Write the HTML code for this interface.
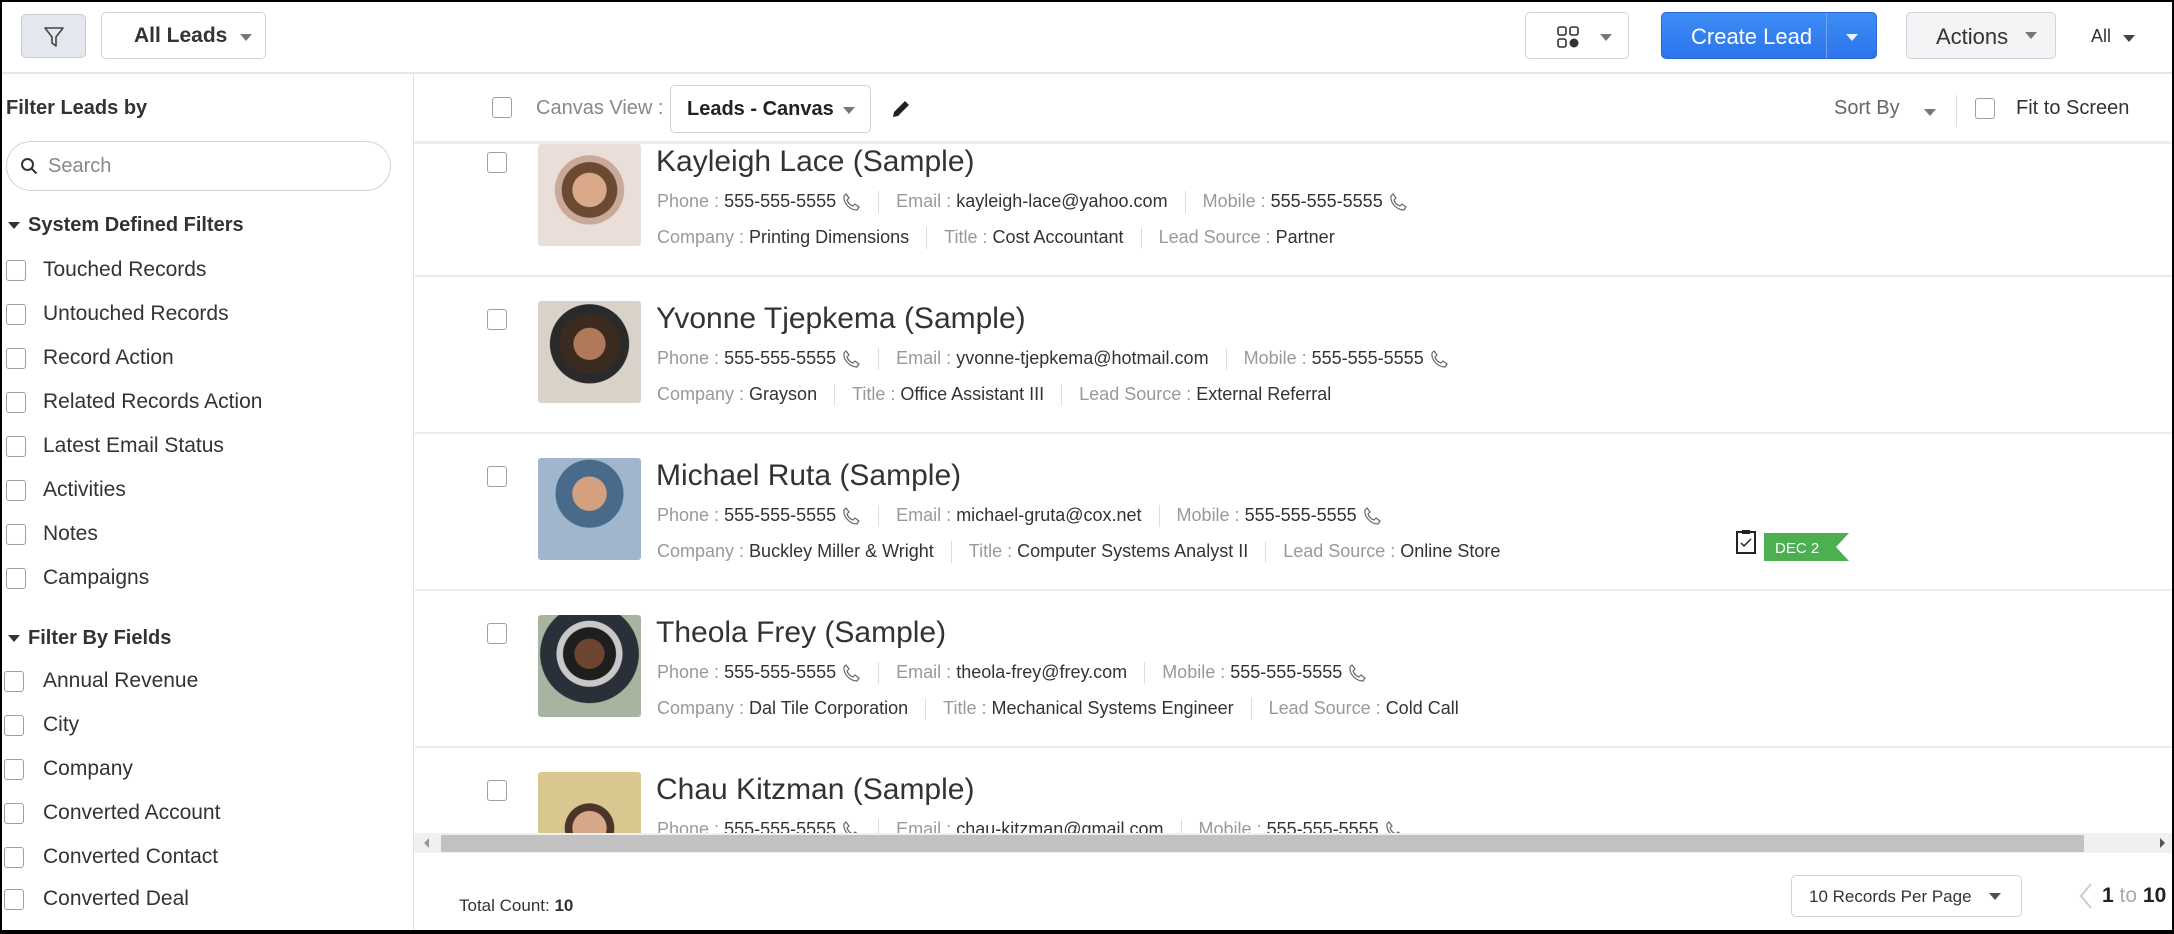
<!DOCTYPE html>
<html><head><meta charset="utf-8"><style>
*{box-sizing:border-box;margin:0;padding:0}
html,body{overflow:hidden}
body{width:2174px;height:934px;overflow:hidden;background:#fff;font-family:"Liberation Sans",sans-serif;color:#333;position:relative}
.frame{position:absolute;left:0;top:0;width:2174px;height:934px;border:2px solid #000;border-bottom-width:4px;z-index:50;pointer-events:none}
.abs{position:absolute}
.btn{position:absolute;border:1px solid #cfd3d9;border-radius:5px;background:#fff}
.caret{display:inline-block;width:0;height:0;border-left:6px solid transparent;border-right:6px solid transparent;border-top:7px solid #777}
.cb{position:absolute;width:20px;height:21px;border:1.5px solid #9aa0a6;border-radius:3px;background:#fff}
.side{position:absolute;left:43px;font-size:21px;color:#333}
.hd{position:absolute;left:8px;font-size:20px;font-weight:bold;color:#333}
.card{position:absolute;left:415px;width:1757px;height:157px;border-bottom:2px solid #ececec}
.name{position:absolute;left:241px;top:25px;font-size:30px;color:#333;white-space:nowrap}
.row{position:absolute;left:242px;font-size:18px;white-space:nowrap;color:#333}
.l{color:#999}
.sep{display:inline-block;width:1px;height:22px;background:#ddd;vertical-align:middle;margin:0 17px}
.ph{display:inline-block;width:20px;height:20px;vertical-align:middle;margin-left:5px}
.photo{position:absolute;left:123px;top:24px;width:103px;height:102px;border-radius:3px}
</style></head><body>
<div class="frame"></div>
<div class="btn" style="left:21px;top:14px;width:65px;height:44px;background:#e4e8ee;border-color:#c5cad2">
<svg class="abs" style="left:21px;top:11px" width="22" height="22" viewBox="0 0 22 22"><path d="M2 2h18l-7 9v9l-4-3v-6z" fill="none" stroke="#444" stroke-width="1.6" stroke-linejoin="round"/></svg></div>
<div class="btn" style="left:101px;top:12px;width:165px;height:47px"><span class="abs" style="left:32px;top:11px;font-size:21px;font-weight:bold;color:#333">All Leads</span><span class="caret abs" style="left:138px;top:21px"></span></div>
<div class="btn" style="left:1525px;top:12px;width:104px;height:47px">
<svg class="abs" style="left:31px;top:13px" width="22" height="22" viewBox="0 0 22 22"><rect x="1" y="1" width="8" height="8" rx="2" fill="none" stroke="#333" stroke-width="1.6"/><rect x="13" y="1" width="8" height="8" rx="2" fill="none" stroke="#333" stroke-width="1.6"/><rect x="1" y="13" width="8" height="8" rx="2" fill="none" stroke="#333" stroke-width="1.6"/><circle cx="17" cy="17" r="4.5" fill="#333"/></svg>
<span class="caret abs" style="left:74px;top:21px"></span></div>
<div class="abs" style="left:1661px;top:12px;width:216px;height:47px;border-radius:5px;background:linear-gradient(#3d8df5,#2d74ec);border:1px solid #2a6ad6">
<span class="abs" style="left:29px;top:11px;font-size:22px;color:#fff">Create Lead</span>
<span class="abs" style="left:164px;top:0;width:1px;height:45px;background:#6fa5f3"></span>
<span class="caret abs" style="left:184px;top:21px;border-top-color:#e8f0ff"></span></div>
<div class="btn" style="left:1906px;top:12px;width:150px;height:47px;background:#f3f4f6"><span class="abs" style="left:29px;top:11px;font-size:22px;color:#333">Actions</span><span class="caret abs" style="left:118px;top:19px"></span></div>
<span class="abs" style="left:2091px;top:26px;font-size:18px;color:#333">All</span><span class="caret abs" style="left:2123px;top:35px;border-top-color:#444"></span>
<div class="abs" style="left:0;top:72px;width:2174px;height:2px;background:#e3e7ec"></div>
<div class="abs" style="left:413px;top:74px;width:1px;height:856px;background:#dcdfe3"></div>
<div class="hd" style="left:6px;top:97px">Filter Leads by</div>
<div class="abs" style="left:6px;top:141px;width:385px;height:50px;border:1px solid #cfd3d9;border-radius:25px">
<svg class="abs" style="left:13px;top:15px" width="18" height="18" viewBox="0 0 18 18"><circle cx="7.5" cy="7.5" r="5.5" fill="none" stroke="#333" stroke-width="2"/><path d="M11.5 11.5l5 5" stroke="#333" stroke-width="2"/></svg>
<span class="abs" style="left:41px;top:13px;font-size:20px;color:#888">Search</span></div>
<div class="hd" style="top:214px"><span class="caret" style="border-top-color:#333;vertical-align:middle;margin-right:8px"></span>System Defined Filters</div>
<div class="cb" style="left:6px;top:260px"></div><div class="side" style="top:258px">Touched Records</div>
<div class="cb" style="left:6px;top:304px"></div><div class="side" style="top:302px">Untouched Records</div>
<div class="cb" style="left:6px;top:348px"></div><div class="side" style="top:346px">Record Action</div>
<div class="cb" style="left:6px;top:392px"></div><div class="side" style="top:390px">Related Records Action</div>
<div class="cb" style="left:6px;top:436px"></div><div class="side" style="top:434px">Latest Email Status</div>
<div class="cb" style="left:6px;top:480px"></div><div class="side" style="top:478px">Activities</div>
<div class="cb" style="left:6px;top:524px"></div><div class="side" style="top:522px">Notes</div>
<div class="cb" style="left:6px;top:568px"></div><div class="side" style="top:566px">Campaigns</div>
<div class="hd" style="top:627px"><span class="caret" style="border-top-color:#333;vertical-align:middle;margin-right:8px"></span>Filter By Fields</div>
<div class="cb" style="left:4px;top:671px"></div><div class="side" style="top:669px">Annual Revenue</div>
<div class="cb" style="left:4px;top:715px"></div><div class="side" style="top:713px">City</div>
<div class="cb" style="left:4px;top:759px"></div><div class="side" style="top:757px">Company</div>
<div class="cb" style="left:4px;top:803px"></div><div class="side" style="top:801px">Converted Account</div>
<div class="cb" style="left:4px;top:847px"></div><div class="side" style="top:845px">Converted Contact</div>
<div class="cb" style="left:4px;top:889px"></div><div class="side" style="top:887px">Converted Deal</div>
<div class="cb" style="left:492px;top:97px"></div>
<span class="abs" style="left:536px;top:97px;font-size:20px;color:#888">Canvas View :</span>
<div class="btn" style="left:670px;top:85px;width:201px;height:48px"><span class="abs" style="left:16px;top:12px;font-size:20px;font-weight:bold;color:#222">Leads - Canvas</span><span class="caret abs" style="left:172px;top:21px"></span></div>
<svg class="abs" style="left:890px;top:98px" width="22" height="22" viewBox="0 0 22 22"><path d="M3 19l1-5L15 3l4 4L8 18z" fill="#222"/></svg>
<span class="abs" style="left:1834px;top:97px;font-size:20px;color:#666">Sort By</span><span class="caret abs" style="left:1924px;top:109px"></span>
<div class="abs" style="left:1956px;top:95px;width:1px;height:32px;background:#ddd"></div>
<div class="cb" style="left:1975px;top:98px"></div>
<span class="abs" style="left:2016px;top:97px;font-size:20px;color:#333">Fit to Screen</span>
<div class="abs" style="left:414px;top:141px;width:1758px;height:3px;background:#eceef0"></div>
<div class="abs" style="left:0;top:144px;width:2172px;height:690px;overflow:hidden">
<div class="abs" style="left:0;top:-144px;width:2172px;height:834px">

<div class="card" style="top:120px">
<div class="cb" style="left:72px;top:32px"></div>
<div class="photo" style="background:radial-gradient(circle at 50% 45%,#d9a98a 0 22%,#6b4a33 23% 36%,#c9a99a 37% 45%,#e9ded8 46%)"></div>
<div class="name">Kayleigh Lace (Sample)</div>
<div class="row" style="top:71px"><span class="l">Phone : </span>555-555-5555<svg class="ph" viewBox="0 0 20 20"><path d="M5 2l3 4-2 2c1 3 3 5 6 6l2-2 4 3-2 3C9 18 2 11 3 4z" fill="none" stroke="#666" stroke-width="1.2"/></svg><span class="sep"></span><span class="l">Email : </span>kayleigh-lace@yahoo.com<span class="sep"></span><span class="l">Mobile : </span>555-555-5555<svg class="ph" viewBox="0 0 20 20"><path d="M5 2l3 4-2 2c1 3 3 5 6 6l2-2 4 3-2 3C9 18 2 11 3 4z" fill="none" stroke="#666" stroke-width="1.2"/></svg></div>
<div class="row" style="top:107px"><span class="l">Company : </span>Printing Dimensions<span class="sep"></span><span class="l">Title : </span>Cost Accountant<span class="sep"></span><span class="l">Lead Source : </span>Partner</div>
</div>

<div class="card" style="top:277px">
<div class="cb" style="left:72px;top:32px"></div>
<div class="photo" style="background:radial-gradient(circle at 50% 42%,#b07a5a 0 20%,#3b2a20 21% 38%,#2a2a2a 39% 50%,#d8d2c8 51%)"></div>
<div class="name">Yvonne Tjepkema (Sample)</div>
<div class="row" style="top:71px"><span class="l">Phone : </span>555-555-5555<svg class="ph" viewBox="0 0 20 20"><path d="M5 2l3 4-2 2c1 3 3 5 6 6l2-2 4 3-2 3C9 18 2 11 3 4z" fill="none" stroke="#666" stroke-width="1.2"/></svg><span class="sep"></span><span class="l">Email : </span>yvonne-tjepkema@hotmail.com<span class="sep"></span><span class="l">Mobile : </span>555-555-5555<svg class="ph" viewBox="0 0 20 20"><path d="M5 2l3 4-2 2c1 3 3 5 6 6l2-2 4 3-2 3C9 18 2 11 3 4z" fill="none" stroke="#666" stroke-width="1.2"/></svg></div>
<div class="row" style="top:107px"><span class="l">Company : </span>Grayson<span class="sep"></span><span class="l">Title : </span>Office Assistant III<span class="sep"></span><span class="l">Lead Source : </span>External Referral</div>
</div>

<div class="card" style="top:434px">
<div class="cb" style="left:72px;top:32px"></div>
<div class="photo" style="background:radial-gradient(circle at 50% 35%,#d4a080 0 20%,#4a6a8a 21% 40%,#9fb6cc 41%)"></div>
<div class="name">Michael Ruta (Sample)</div>
<div class="row" style="top:71px"><span class="l">Phone : </span>555-555-5555<svg class="ph" viewBox="0 0 20 20"><path d="M5 2l3 4-2 2c1 3 3 5 6 6l2-2 4 3-2 3C9 18 2 11 3 4z" fill="none" stroke="#666" stroke-width="1.2"/></svg><span class="sep"></span><span class="l">Email : </span>michael-gruta@cox.net<span class="sep"></span><span class="l">Mobile : </span>555-555-5555<svg class="ph" viewBox="0 0 20 20"><path d="M5 2l3 4-2 2c1 3 3 5 6 6l2-2 4 3-2 3C9 18 2 11 3 4z" fill="none" stroke="#666" stroke-width="1.2"/></svg></div>
<div class="row" style="top:107px"><span class="l">Company : </span>Buckley Miller &amp; Wright<span class="sep"></span><span class="l">Title : </span>Computer Systems Analyst II<span class="sep"></span><span class="l">Lead Source : </span>Online Store</div>
<svg class="abs" style="left:1320px;top:95px" width="22" height="26" viewBox="0 0 22 26"><rect x="2" y="3" width="18" height="21" fill="none" stroke="#222" stroke-width="2"/><rect x="7" y="1" width="8" height="4" fill="#222"/><path d="M6 14l3 3 7-7" fill="none" stroke="#222" stroke-width="1.5"/></svg>
<svg class="abs" style="left:1349px;top:99px" width="85" height="28" viewBox="0 0 85 28"><path d="M0 0h85l-13 14 13 14H0z" fill="#4caf50"/><text x="11" y="20" font-family="Liberation Sans" font-size="15" fill="#fff">DEC 2</text></svg>
</div>

<div class="card" style="top:591px">
<div class="cb" style="left:72px;top:32px"></div>
<div class="photo" style="background:radial-gradient(circle at 50% 38%,#6b4530 0 18%,#1e1e1e 19% 32%,#c8c8c8 33% 40%,#29303a 41% 60%,#a8b4a0 61%)"></div>
<div class="name">Theola Frey (Sample)</div>
<div class="row" style="top:71px"><span class="l">Phone : </span>555-555-5555<svg class="ph" viewBox="0 0 20 20"><path d="M5 2l3 4-2 2c1 3 3 5 6 6l2-2 4 3-2 3C9 18 2 11 3 4z" fill="none" stroke="#666" stroke-width="1.2"/></svg><span class="sep"></span><span class="l">Email : </span>theola-frey@frey.com<span class="sep"></span><span class="l">Mobile : </span>555-555-5555<svg class="ph" viewBox="0 0 20 20"><path d="M5 2l3 4-2 2c1 3 3 5 6 6l2-2 4 3-2 3C9 18 2 11 3 4z" fill="none" stroke="#666" stroke-width="1.2"/></svg></div>
<div class="row" style="top:107px"><span class="l">Company : </span>Dal Tile Corporation<span class="sep"></span><span class="l">Title : </span>Mechanical Systems Engineer<span class="sep"></span><span class="l">Lead Source : </span>Cold Call</div>
</div>

<div class="card" style="top:748px;height:86px;overflow:hidden;border-bottom:none">
<div class="cb" style="left:72px;top:32px"></div>
<div class="photo" style="background:radial-gradient(circle at 50% 55%,#d6a888 0 22%,#4a3528 23% 32%,#d8c890 33%)"></div>
<div class="name">Chau Kitzman (Sample)</div>
<div class="row" style="top:71px"><span class="l">Phone : </span>555-555-5555<svg class="ph" viewBox="0 0 20 20"><path d="M5 2l3 4-2 2c1 3 3 5 6 6l2-2 4 3-2 3C9 18 2 11 3 4z" fill="none" stroke="#666" stroke-width="1.2"/></svg><span class="sep"></span><span class="l">Email : </span>chau-kitzman@gmail.com<span class="sep"></span><span class="l">Mobile : </span>555-555-5555<svg class="ph" viewBox="0 0 20 20"><path d="M5 2l3 4-2 2c1 3 3 5 6 6l2-2 4 3-2 3C9 18 2 11 3 4z" fill="none" stroke="#666" stroke-width="1.2"/></svg></div>
</div>
</div></div>
<div class="abs" style="left:414px;top:833px;width:1758px;height:20px;background:#f0f0f0"></div>
<div class="abs" style="left:441px;top:835px;width:1643px;height:17px;background:#c1c1c1"></div>
<div class="abs" style="left:424px;top:838px;width:0;height:0;border-top:5px solid transparent;border-bottom:5px solid transparent;border-right:5px solid #999"></div>
<div class="abs" style="left:2160px;top:838px;width:0;height:0;border-top:5px solid transparent;border-bottom:5px solid transparent;border-left:5px solid #555"></div>
<span class="abs" style="left:459px;top:896px;font-size:17px;color:#333">Total Count: <b>10</b></span>
<div class="btn" style="left:1791px;top:875px;width:231px;height:42px"><span class="abs" style="left:17px;top:11px;font-size:17px;color:#333">10 Records Per Page</span><span class="caret abs" style="left:197px;top:17px;border-top-color:#455"></span></div>
<svg class="abs" style="left:2078px;top:882px" width="16" height="28" viewBox="0 0 16 28"><path d="M13 2L3 14l10 12" fill="none" stroke="#ccc" stroke-width="2"/></svg>
<span class="abs" style="left:2102px;top:884px;font-size:21px;color:#222"><b>1</b> <span style="color:#aaa">to</span> <b>10</b></span>
</body></html>
